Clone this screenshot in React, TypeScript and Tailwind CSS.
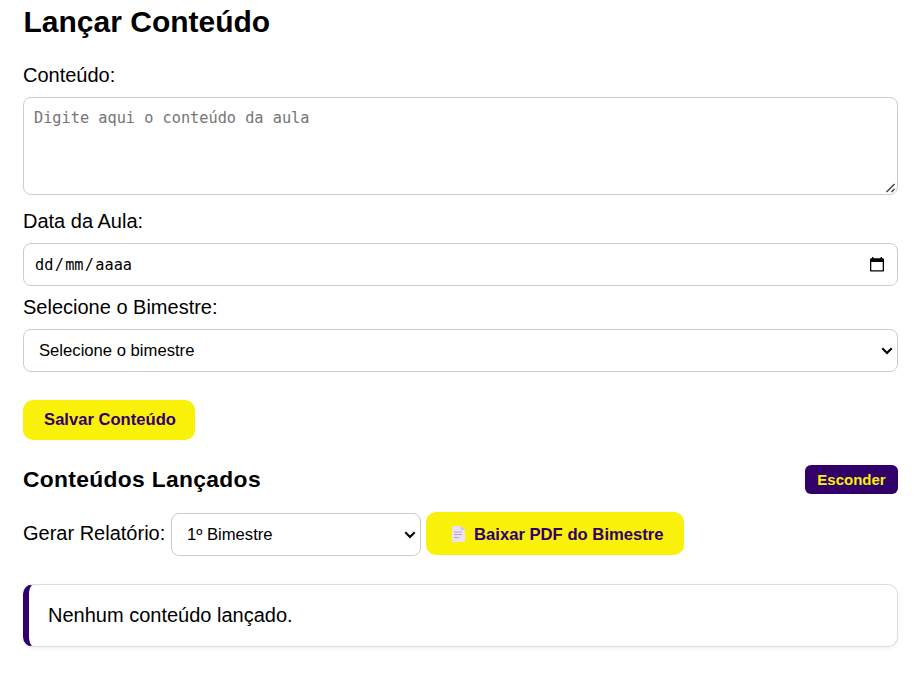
import { useState } from "react";

const bimestres = ["1º Bimestre", "2º Bimestre", "3º Bimestre", "4º Bimestre"];

function CalendarIcon() {
  return (
    <svg width="14" height="15" viewBox="0 0 14 15" className="block">
      <path
        d="M2 0h1.4v1.2h7.2V0H12v1.2h.8q1.2 0 1.2 1.2v11q0 1.2-1.2 1.2H1.2Q0 14.6 0 13.4v-11q0-1.2 1.2-1.2H2z M1.3 5v8.3h11.4V5z"
        fill="#000"
        fillRule="evenodd"
      />
    </svg>
  );
}

function PageIcon() {
  return (
    <svg width="14" height="16" viewBox="0 0 14 16" className="block">
      <path d="M0 0h9l4 4v12H0z" fill="#eae2f2" />
      <path d="M9 0l4 4H9z" fill="#d0c3de" />
      <path d="M2 5h8v2H2z" fill="#cfc4dc" />
      <path d="M2 8.5h8M2 11.5h5" stroke="#b3a6c4" strokeWidth="1" />
    </svg>
  );
}

function Arrow() {
  return (
    <svg
      width="12"
      height="8"
      viewBox="0 0 12 8"
      className="pointer-events-none absolute top-[18px] right-[5px]"
    >
      <path d="M1.3 1.2L6 5.9l4.7-4.7" fill="none" stroke="#000" strokeWidth="2.1" />
    </svg>
  );
}

export default function App() {
  const [bimestre, setBimestre] = useState("");
  const [relatorio, setRelatorio] = useState(bimestres[0]);
  const [visible, setVisible] = useState(true);

  return (
    <main className="min-h-[679px] bg-white pl-[23px] pr-[21px] font-['Liberation_Sans',Arial,sans-serif] text-[20px] text-black">
      <h1 className="h-[53px] pt-[5px] pl-[0.5px] text-[30px] leading-[34px] font-bold">
        Lançar Conteúdo
      </h1>

      <form onSubmit={(e) => e.preventDefault()}>
        <label htmlFor="conteudo" className="block h-[44px] pt-[10px] leading-[24px]">
          Conteúdo:
        </label>
        <div className="relative">
          <textarea
            id="conteudo"
            placeholder="Digite aqui o conteúdo da aula"
            className="block h-[98px] w-full resize-none rounded-[8px] border border-[#ccc] p-[10px] font-['DejaVu_Sans_Mono',monospace] text-[15.25px] leading-[20px] placeholder:text-[#757575]"
          />
          <svg width="10" height="10" viewBox="0 0 10 10" className="absolute right-[2px] bottom-[2px]">
            <path d="M.5 9L8.5 1M5.5 9L8.5 6" fill="none" stroke="#444" strokeWidth="1.5" />
          </svg>
        </div>

        <div className="flex h-[48px] items-center pt-[4px]">Data da Aula:</div>
        <div className="flex h-[43px] items-center justify-between rounded-[8px] border border-[#ccc] pr-[13px] pl-[11px] font-['DejaVu_Sans_Mono',monospace] text-[15.25px]">
          <span className="flex pt-[2px]">
            <span>dd</span>
            <span className="px-[1.3px]">/</span>
            <span>mm</span>
            <span className="px-[1.3px]">/</span>
            <span>aaaa</span>
          </span>
          <CalendarIcon />
        </div>

        <label htmlFor="bimestre" className="flex h-[43px] items-center pb-[2px]">
          Selecione o Bimestre:
        </label>
        <div className="relative">
          <select
            id="bimestre"
            value={bimestre}
            onChange={(e) => setBimestre(e.target.value)}
            className="block h-[43px] w-full appearance-none rounded-[8px] border border-[#ccc] bg-white pt-[2px] pl-[15px] text-[16.65px]"
          >
            <option value="">Selecione o bimestre</option>
            {bimestres.map((item) => (
              <option key={item}>{item}</option>
            ))}
          </select>
          <Arrow />
        </div>

        <button className="mt-[28px] block h-[40px] w-[172px] rounded-[10px] bg-[#f9f10a] pl-[2px] text-[16.6px] font-bold text-[#310069]">
          Salvar Conteúdo
        </button>
      </form>

      <div className="mt-[25px] flex h-[29px] items-center justify-between">
        <h2 className="text-[22.8px] font-bold tracking-[0.34px]">Conteúdos Lançados</h2>
        <button
          onClick={() => setVisible(!visible)}
          className="h-[29px] w-[93px] rounded-[6px] bg-[#310069] pt-[2px] text-[15px] font-bold text-[#f9f10a]"
        >
          Esconder
        </button>
      </div>

      <div className="mt-[18px] flex h-[43px] items-center">
        <label htmlFor="relatorio" className="w-[148px] pb-[2px] whitespace-nowrap">
          Gerar Relatório:
        </label>
        <div className="relative mt-[2px] w-[250px]">
          <select
            id="relatorio"
            value={relatorio}
            onChange={(e) => setRelatorio(e.target.value)}
            className="block h-[43px] w-full appearance-none rounded-[8px] border border-[#ccc] bg-white pt-[2px] pl-[15px] text-[16.65px]"
          >
            {bimestres.map((item) => (
              <option key={item}>{item}</option>
            ))}
          </select>
          <Arrow />
        </div>
        <button className="ml-[5px] flex h-[43px] w-[258px] items-center rounded-[10px] bg-[#f9f10a] pl-[26px] text-[16.65px] font-bold whitespace-nowrap text-[#310069]">
          <PageIcon />
          <span className="ml-[8px] pt-[3px]">Baixar PDF do Bimestre</span>
        </button>
      </div>

      {visible && (
        <div className="mt-[29px] flex h-[63px] items-center rounded-[10px] border border-l-[6px] border-[#ddd] border-l-[#310069] bg-white pb-[2px] pl-[19px] shadow-[0_2px_5px_rgba(0,0,0,0.05)]">
          Nenhum conteúdo lançado.
        </div>
      )}
    </main>
  );
}
